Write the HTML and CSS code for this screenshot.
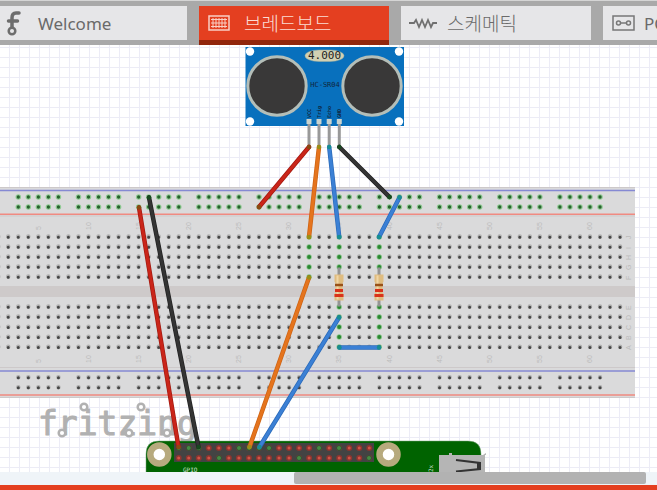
FILE: index.html
```html
<!DOCTYPE html>
<html lang="ko">
<head>
<meta charset="utf-8">
<title>Fritzing</title>
<link rel="stylesheet" href="styles.css">
</head>
<body>
<nav class="tabs" role="tablist">
  <button class="tab" role="tab">
    <svg class="icon" width="24" height="28" viewBox="0 0 24 28" fill="none" stroke="#6d6d6d"><path d="M14 4h-3q-4 0-4 5v9M3.500 12h9" stroke-width="3.500" stroke-linecap="round"/><circle cx="7" cy="22" r="3.300" stroke-width="2.500"/></svg>
    <span>Welcome</span>
  </button>
  <button class="tab active" role="tab" aria-selected="true">
    <svg class="icon" width="24" height="28" viewBox="0 0 24 28" fill="none" stroke="#f9cfc5"><rect x="2" y="7" width="20" height="14" stroke-width="1.500"/><path d="M4 10.500h16M4 14h16M4 17.500h16M6 9v10M9 9v10M12 9v10M15 9v10M18 9v10"/></svg>
    <span class="ko">브레드보드</span>
  </button>
  <button class="tab" role="tab">
    <svg class="icon wide" width="28" height="28" viewBox="0 0 28 28" fill="none" stroke="#707070" stroke-width="1.800"><path d="M0 14h5l2-3 3 7 3-7 3 7 3-7 3 7 2-4h4"/></svg>
    <span class="ko">스케메틱</span>
  </button>
  <button class="tab" role="tab">
    <svg class="icon" width="24" height="28" viewBox="0 0 24 28" fill="none" stroke="#777" stroke-width="1.500"><rect x="2" y="7" width="21" height="14"/><circle cx="7.500" cy="14" r="2"/><circle cx="17.500" cy="14" r="2"/><path d="M9.500 14h6"/></svg>
    <span>PCB</span>
  </button>
</nav>
<main class="canvas">
<svg class="sketch" viewBox="0 45 657 427" preserveAspectRatio="xMinYMin slice">
  <defs>
    <pattern id="grid" x="9" y="7" width="10" height="10" patternUnits="userSpaceOnUse"><path d="M.5 0v10M0 .5h10" stroke="#ececf6" fill="none"/></pattern>
    <g id="resistor">
      <path d="M0-20V-12M0 12V19" stroke="#959595" stroke-width="3"/>
      <path d="M-4.500-13h9v7l-1 2v9l1 2v6h-9v-6l1-2v-9l-1-2z" fill="#dfbc80"/>
      <path d="M-1.500-12V12" stroke="#f0d6a6" stroke-width="2"/>
      <path d="M-4-2.500h8" stroke="#985018" stroke-width="2.500"/>
      <path d="M-4 3h8M-4.500 8h9" stroke="#d93218" stroke-width="3"/>
    </g>
    <g id="mount"><circle r="9" fill="#fff" stroke="#b7aa7e" stroke-width="6.500"/></g>
  </defs>
  <rect x="0" y="45" width="2000" height="1000" fill="#fff"/>
  <rect x="0" y="45" width="2000" height="1000" fill="url(#grid)"/>

  <!-- breadboard -->
  <rect x="-2" y="187" width="637" height="211" fill="#dadadb"/>
  <path d="M0 187.500h635M0 216h635M0 367.500h635M0 397.500h635" stroke="#cdc9ca"/>
  <rect x="0" y="286" width="635" height="11" fill="#cecaca"/>
  <path d="M0 190.500h635M0 371h635" stroke="#8589d3" stroke-width="1.500"/>
  <path d="M0 214.300h635M0 395h635" stroke="#f08a81" stroke-width="1.500"/>
  <g fill="none" stroke-linecap="round">
    <g class="rail">
      <path class="halo" d="M18.300 197H605M18.300 207H605"/>
      <path class="pin" d="M18.300 197H605M18.300 207H605"/>
      <path class="hole-shade" d="M18.300 377.300H605M18.300 387.300H605"/>
      <path class="hole" d="M18.300 377.700H605M18.300 387.700H605"/>
    </g>
    <g class="field">
      <path class="hole-shade" d="M-1.800 236.600H622M-1.800 246.600H622M-1.800 256.600H622M-1.800 266.600H622M-1.800 276.600H622M-1.800 306.600H622M-1.800 316.600H622M-1.800 326.800H622M-1.800 336.800H622M-1.800 346.800H622"/>
      <path class="hole" d="M-1.800 237.200H622M-1.800 247.200H622M-1.800 257.200H622M-1.800 267.200H622M-1.800 277.200H622M-1.800 307.200H622M-1.800 317.200H622M-1.800 327.500H622M-1.800 337.500H622M-1.800 347.500H622"/>
      <path class="halo" d="M309.100 237v45M339.200 237v32M379.300 237v32M339.200 307v42M379.300 307v42"/>
      <path class="pin live" d="M309.100 237v45M339.200 237v32M379.300 237v32M339.200 307v42M379.300 307v42"/>
    </g>
  </g>
  <g class="marks">
    <g id="numbers">
      <text transform="translate(41 230) rotate(-90)">5</text><text transform="translate(91 230) rotate(-90)">10</text><text transform="translate(141 230) rotate(-90)">15</text><text transform="translate(191 230) rotate(-90)">20</text><text transform="translate(241 230) rotate(-90)">25</text><text transform="translate(291 230) rotate(-90)">30</text><text transform="translate(341 230) rotate(-90)">35</text><text transform="translate(392 230) rotate(-90)">40</text><text transform="translate(442 230) rotate(-90)">45</text><text transform="translate(492 230) rotate(-90)">50</text><text transform="translate(542 230) rotate(-90)">55</text><text transform="translate(592 230) rotate(-90)">60</text>
    </g>
    <use href="#numbers" y="133"/>
    <text transform="translate(631 239) rotate(-90)">J</text><text transform="translate(631 249) rotate(-90)">I</text><text transform="translate(631 260) rotate(-90)">H</text><text transform="translate(631 270) rotate(-90)">G</text><text transform="translate(631 280) rotate(-90)">F</text>
    <text transform="translate(631 310) rotate(-90)">E</text><text transform="translate(631 320) rotate(-90)">D</text><text transform="translate(631 330) rotate(-90)">C</text><text transform="translate(631 340) rotate(-90)">B</text><text transform="translate(631 350) rotate(-90)">A</text>
  </g>

  <!-- watermark -->
  <text class="brand" x="38" y="435">fritzing</text>
  <g fill="#fff" stroke="#b1b1b1" stroke-width="2.500">
    <circle cx="62" cy="433" r="3.300"/><circle cx="84" cy="407" r="3.300"/><circle cx="129" cy="433" r="3.300"/><circle cx="141" cy="407" r="3.300"/><circle cx="167" cy="433" r="3.300"/>
  </g>

  <!-- GPIO board -->
  <path d="M146 473v-19q0-13 13-13h309q13 0 13 13v19z" fill="#006300" stroke="#7ba27b" stroke-width=".500"/>
  <rect x="174" y="443" width="200" height="19" fill="#434343"/>
  <path d="M178.700 448H372M178.700 458H372" class="socket"/>
  <path d="M178.700 448H372M178.700 458H372" class="socket core"/>
  <g fill="#438b42" stroke="#344b34"><circle cx="178.700" cy="448" r="2.500"/><circle cx="188.700" cy="448" r="2.500"/><circle cx="198.700" cy="448" r="2.500"/><circle cx="239" cy="448" r="2.500"/><circle cx="249" cy="448" r="2.500"/><circle cx="259" cy="448" r="2.500"/><circle cx="269" cy="448" r="2.500"/><circle cx="319" cy="448" r="2.500"/><circle cx="339" cy="448" r="2.500"/><circle cx="219" cy="458" r="2.500"/><circle cx="299" cy="458" r="2.500"/><circle cx="369" cy="458" r="2.500"/></g>
  <use href="#mount" x="159.300" y="454.500"/><use href="#mount" x="388.500" y="454.500"/>
  <text class="silk" x="183" y="472">GPIO</text>
  <text class="silk" transform="translate(433 472) rotate(-90)">2x</text>
  <path d="M439 473v-18h10v-2h3v2h31l3-2v2h-1v18z" fill="#b5b5b5"/>
  <path d="M456 460l24 3v6l-24 2.500" fill="none" stroke="#333" stroke-width="2"/><path d="M479 463v6" stroke="#333" stroke-width="4"/>

  <!-- HC-SR04 ultrasonic sensor -->
  <rect x="245.500" y="47" width="158.500" height="79" fill="#0870bd"/>
  <g fill="#fff"><circle cx="250" cy="51.500" r="4.200"/><circle cx="399" cy="51.500" r="4.200"/><circle cx="250" cy="121.500" r="4.200"/><circle cx="399" cy="121.500" r="4.200"/></g>
  <g fill="#393838" stroke="#b4beb8" stroke-width="3"><circle cx="277" cy="86" r="29.200"/><circle cx="372" cy="86" r="29.200"/></g>
  <rect x="305" y="50" width="39" height="11.500" rx="14" ry="5.700" fill="#d2d0b2" stroke="#9fae9f" stroke-width=".500"/>
  <text class="crystal" x="324.500" y="59">4.000</text>
  <text class="model" x="325" y="87">HC-SR04</text>
  <g class="pinname"><text transform="translate(311 118) rotate(-90)">VCC</text><text transform="translate(321 118) rotate(-90)">Trig</text><text transform="translate(331 118) rotate(-90)">Echo</text><text transform="translate(341 118) rotate(-90)">GND</text></g>
  <path d="M309 124v23M319 124v23M329.200 124v23M339.300 124v23" stroke="#999" stroke-width="3"/>
  <path d="M306.500 119h5v5h-5zM316.500 119h5v5h-5zM326.700 119h5v5h-5zM336.800 119h5v5h-5z" fill="#cad3cf"/>

  <use href="#resistor" x="339" y="287.500"/><use href="#resistor" x="379" y="287.500"/>

  <!-- wires -->
  <g fill="none" stroke-linecap="round" stroke-width="4.500">
    <path d="M309 147L259 207M139 207.500L178.500 447" stroke="#a31a10"/>
    <path d="M319 147L309 237M309 277.500L249.500 447" stroke="#cd6415"/>
    <path d="M329.200 147L339.200 237M399.500 197.500L379 237M339 317.500L259.500 447M339.500 347.500H379" stroke="#2b6bba"/>
    <path d="M339.300 147L389.500 197M149 197.500L198.500 447" stroke="#222"/>
    <g stroke-width="3">
      <path d="M309 147L259 207M139 207.500L178.500 447" stroke="#ca2519"/>
      <path d="M319 147L309 237M309 277.500L249.500 447" stroke="#e5741d"/>
      <path d="M329.200 147L339.200 237M399.500 197.500L379 237M339 317.500L259.500 447M339.500 347.500H379" stroke="#3b80d5"/>
      <path d="M339.300 147L389.500 197M149 197.500L198.500 447" stroke="#343434"/>
    </g>
  </g>
  <g fill="#8a4b12"><circle cx="309" cy="147" r="2.200"/><circle cx="259" cy="207" r="2.200"/><circle cx="139" cy="207.500" r="2.200"/><circle cx="178.500" cy="447" r="2.200"/></g>
  <g fill="#989017"><circle cx="319" cy="147" r="2.200"/><circle cx="309" cy="237" r="2.200"/><circle cx="309" cy="277.500" r="2.200"/><circle cx="249.500" cy="447" r="2.200"/></g>
  <g fill="#178e91"><circle cx="329.200" cy="147" r="2.200"/><circle cx="339.200" cy="237" r="2.200"/><circle cx="399.500" cy="197.500" r="2.200"/><circle cx="379" cy="237" r="2.200"/><circle cx="339" cy="317.500" r="2.200"/><circle cx="259.500" cy="447" r="2.200"/><circle cx="339.500" cy="347.500" r="2.200"/><circle cx="379" cy="347.500" r="2.200"/></g>
  <g fill="#17491f"><circle cx="339.300" cy="147" r="2.200"/><circle cx="389.500" cy="197" r="2.200"/><circle cx="149" cy="197.500" r="2.200"/><circle cx="198.500" cy="447" r="2.200"/></g>
</svg>
</main>
<div class="scroll"><div class="thumb"></div></div>
</body>
</html>
```
FILE: styles.css
```css
* { box-sizing: border-box; }
body {
  margin: 0;
  height: 100vh;
  display: flex;
  flex-direction: column;
  overflow: hidden;
  background: #e43f20;
  font-family: "Noto Sans", "Noto Sans CJK KR", sans-serif;
}
.tabs {
  display: flex;
  flex: none;
  gap: 12px;
  height: 45px;
  padding-top: 5px;
  margin-left: -3px;
  overflow: hidden;
  background: #a9a9a9;
  border-top: 1px solid #d5d5d5;
}
.tab {
  display: flex;
  align-items: center;
  flex: none;
  gap: 9px;
  width: 190px;
  height: 34px;
  padding: 0 8px;
  border: 0;
  background: #e6e6e8;
  color: #6a6a6a;
  font: 17px "Noto Sans", sans-serif;
}
.tab.active {
  height: 39px;
  background: #e43f20;
  border-bottom: 5px solid #91260c;
  color: #fbdcd4;
}
.tab .ko {
  margin-left: 4px;
  font: 300 19px/24px "Noto Sans CJK KR", sans-serif;
}
.icon { flex: none; }
.icon.wide { margin-right: -3px; }
.canvas { flex: 1; min-height: 0; }
.sketch { display: block; width: 100%; height: 100%; }
.scroll {
  flex: none;
  height: 13px;
  margin-bottom: 5px;
  padding: 0 11px 1px 294px;
  background: #eff4f8;
}
.thumb { height: 12px; border-radius: 2px; background: #b2b2b2; }

.field path { stroke-dasharray: 0 10.03; }
.rail path { stroke-dasharray: 0 10.03 0 10.03 0 10.03 0 10.03 0 20.06; }
.hole-shade { stroke: #b0b0b0; stroke-width: 4.500; }
.hole { stroke: #454545; stroke-width: 3; }
.halo { stroke: #8fcb93; stroke-width: 5.500; }
.pin { stroke: #28612e; stroke-width: 3.300; }
.pin.live { stroke: #2c8732; stroke-width: 4; }
.socket {
  fill: none;
  stroke: #8c352f;
  stroke-width: 6;
  stroke-linecap: round;
  stroke-dasharray: 0 10.03;
}
.socket.core { stroke: #d25346; stroke-width: 3; }
.marks { fill: #bcbcbc; font: 7px "Liberation Sans", sans-serif; }
.brand {
  fill: #b1b1b1;
  stroke: #b1b1b1;
  stroke-width: 1;
  stroke-linejoin: round;
  font: 33px "DejaVu Sans Mono", monospace;
}
.silk { fill: #cfe0cf; font: 6px "DejaVu Sans Mono", monospace; }
.crystal { fill: #222; font: 11px "DejaVu Sans Mono", monospace; text-anchor: middle; }
.model { fill: #10263c; font: 7px "DejaVu Sans Mono", monospace; text-anchor: middle; }
.pinname { fill: #10263c; font: bold 5px "DejaVu Sans Mono", monospace; }
```
